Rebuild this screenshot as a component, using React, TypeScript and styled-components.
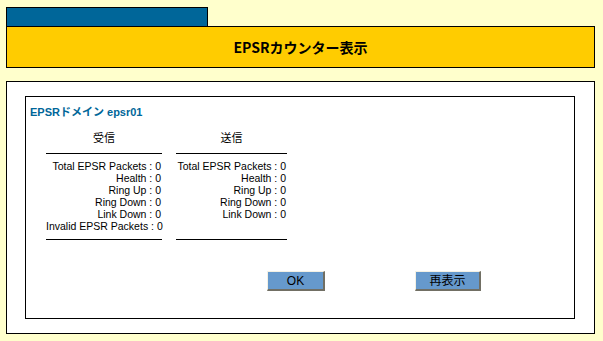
import React from "react";
import styled, { createGlobalStyle } from "styled-components";

const GlobalStyle = createGlobalStyle`
  html, body {
    margin: 0;
    padding: 0;
    background: #ffffcc;
    font-family: "Liberation Sans", "Noto Sans CJK JP", sans-serif;
    color: #000;
  }
`;

const Page = styled.div`
  padding: 7px 0 0 6px;
  width: 589px;
`;

const Tab = styled.div`
  width: 200px;
  height: 18px;
  background: #006699;
  border: 1px solid #000;
  border-bottom: none;
`;

const TitleBar = styled.div`
  height: 40px;
  background: #ffcc00;
  border: 1px solid #000;
  display: flex;
  align-items: center;
  justify-content: center;
  font-size: 14px;
  font-weight: bold;
  font-family: "Noto Sans CJK JP", "Liberation Sans", sans-serif;
`;

const OuterBox = styled.div`
  margin-top: 13px;
  height: 237px;
  background: #fff;
  border: 1px solid #000;
  padding: 14px 19px 0 18px;
  box-sizing: content-box;
  width: 550px;
`;

const InnerBox = styled.div`
  width: 548px;
  height: 221px;
  border: 1px solid #000;
  display: flex;
  flex-direction: column;
`;

const DomainTitle = styled.div`
  margin: 8px 0 0 4px;
  line-height: 14px;
  height: 14px;
  font-size: 11px;
  font-weight: bold;
  color: #006699;
`;

const Stats = styled.div`
  margin: 10px 0 0 20px;
  display: flex;
  gap: 14px;
`;

const Column = styled.div<{ $width: number }>`
  width: ${(p) => p.$width}px;
  display: flex;
  flex-direction: column;
`;

const ColHeader = styled.div`
  height: 16px;
  line-height: 16px;
  font-size: 11px;
  text-align: center;
  font-family: "Noto Sans CJK JP", sans-serif;
`;

const Rule = styled.div<{ $top: number }>`
  margin-top: ${(p) => p.$top}px;
  height: 1px;
  background: #000;
`;

const Rows = styled.div`
  margin-top: 6px;
  height: 72px;
  display: flex;
  flex-direction: column;
`;

const Row = styled.div`
  height: 12px;
  line-height: 12px;
  font-size: 10.5px;
  text-align: right;
  padding-right: 1px;
  white-space: nowrap;
`;

const Buttons = styled.div`
  margin: 31px 0 0 241px;
  display: flex;
  gap: 90px;
`;

const Button = styled.button<{ $width: number }>`
  width: ${(p) => p.$width}px;
  height: 20px;
  padding: 0;
  background: #6699cc;
  border-style: solid;
  border-width: 1px 2px 2px 1px;
  border-color: #f4f1e4 #716f64 #716f64 #f4f1e4;
  font-size: 12px;
  font-family: "Liberation Sans", "Noto Sans CJK JP", sans-serif;
  color: #000;
  line-height: 16px;
`;

const recv = [
  "Total EPSR Packets",
  "Health",
  "Ring Up",
  "Ring Down",
  "Link Down",
  "Invalid EPSR Packets",
];
const send = ["Total EPSR Packets", "Health", "Ring Up", "Ring Down", "Link Down"];

export default function App() {
  return (
    <>
      <GlobalStyle />
      <Page>
        <Tab />
        <TitleBar>EPSRカウンター表示</TitleBar>
        <OuterBox>
          <InnerBox>
            <DomainTitle>EPSRドメイン epsr01</DomainTitle>
            <Stats>
              <Column $width={116}>
                <ColHeader>受信</ColHeader>
                <Rule $top={8} />
                <Rows>
                  {recv.map((r) => (
                    <Row key={r}>{r} : 0</Row>
                  ))}
                </Rows>
                <Rule $top={7} />
              </Column>
              <Column $width={111}>
                <ColHeader>送信</ColHeader>
                <Rule $top={8} />
                <Rows>
                  {send.map((r) => (
                    <Row key={r}>{r} : 0</Row>
                  ))}
                </Rows>
                <Rule $top={7} />
              </Column>
            </Stats>
            <Buttons>
              <Button $width={58}>OK</Button>
              <Button $width={66}>再表示</Button>
            </Buttons>
          </InnerBox>
        </OuterBox>
      </Page>
    </>
  );
}
